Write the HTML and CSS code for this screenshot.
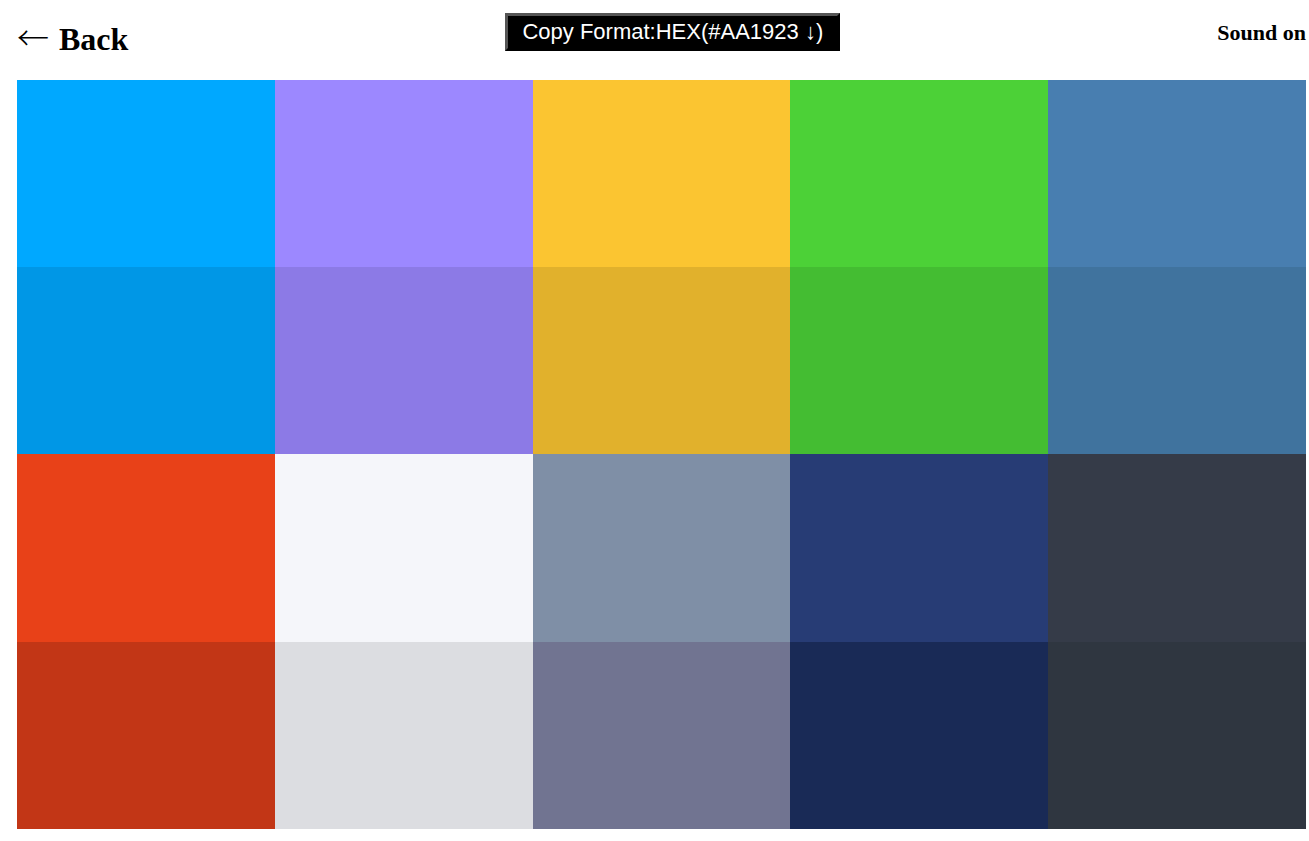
FILE: index.html
```html
<!DOCTYPE html>
<html lang="en">

<head>
  <meta charset="UTF-8">
  <meta name="viewport" content="width=device-width, initial-scale=1.0">
  <title>Palette</title>

  <link rel="stylesheet" href="styles.css">
</head>

<body>
  <header class="top-bar">
    <a class="back" href="#"><span class="back-arrow">&larr;</span> Back</a>
    <button class="copy-format">Copy Format:HEX(#AA1923 &darr;)</button>
    <span class="sound">Sound on</span>
  </header>

  <main class="palette">
    <div class="swatch" style="background: #00a8ff"></div>
    <div class="swatch" style="background: #9c88ff"></div>
    <div class="swatch" style="background: #fbc531"></div>
    <div class="swatch" style="background: #4cd137"></div>
    <div class="swatch" style="background: #487eb0"></div>

    <div class="swatch" style="background: #0097e6"></div>
    <div class="swatch" style="background: #8c7ae6"></div>
    <div class="swatch" style="background: #e1b12c"></div>
    <div class="swatch" style="background: #44bd32"></div>
    <div class="swatch" style="background: #40739e"></div>

    <div class="swatch" style="background: #e84118"></div>
    <div class="swatch" style="background: #f5f6fa"></div>
    <div class="swatch" style="background: #7f8fa6"></div>
    <div class="swatch" style="background: #273c75"></div>
    <div class="swatch" style="background: #353b48"></div>

    <div class="swatch" style="background: #c23616"></div>
    <div class="swatch" style="background: #dcdde1"></div>
    <div class="swatch" style="background: #717491"></div>
    <div class="swatch" style="background: #192a56"></div>
    <div class="swatch" style="background: #2f3640"></div>
  </main>
</body>

</html>
```

FILE: styles.css
```css
body {
  font-family: "Liberation Serif", serif;
  margin: 0;
  padding: 0 3px 12px 17px;
}

.top-bar {
  align-items: flex-start;
  display: flex;
  height: 80px;
  justify-content: space-between;
}

.back {
  color: #000;
  font-size: 32px;
  font-weight: bold;
  line-height: 32px;
  margin-top: 20px;
  text-decoration: none;
}

.back-arrow {
  font-family: "Noto Sans CJK JP", sans-serif;
  font-weight: 300;
  margin-right: 2px;
}

.copy-format {
  background: #000;
  border: 3px solid;
  border-color: #555 #000 #000 #555;
  color: #fff;
  font-family: "Liberation Sans", Arial, sans-serif;
  font-size: 22px;
  height: 38px;
  line-height: 24px;
  margin-top: 13px;
  padding: 0 14px;
}

.copy-format:hover {
  cursor: pointer;
}

.sound {
  font-size: 22px;
  font-weight: bold;
  line-height: 22px;
  margin-top: 22px;
}

.palette {
  display: grid;
  grid-template-columns: repeat(5, 1fr);
  grid-template-rows: 187px 187px 188px 187px;
}
```
